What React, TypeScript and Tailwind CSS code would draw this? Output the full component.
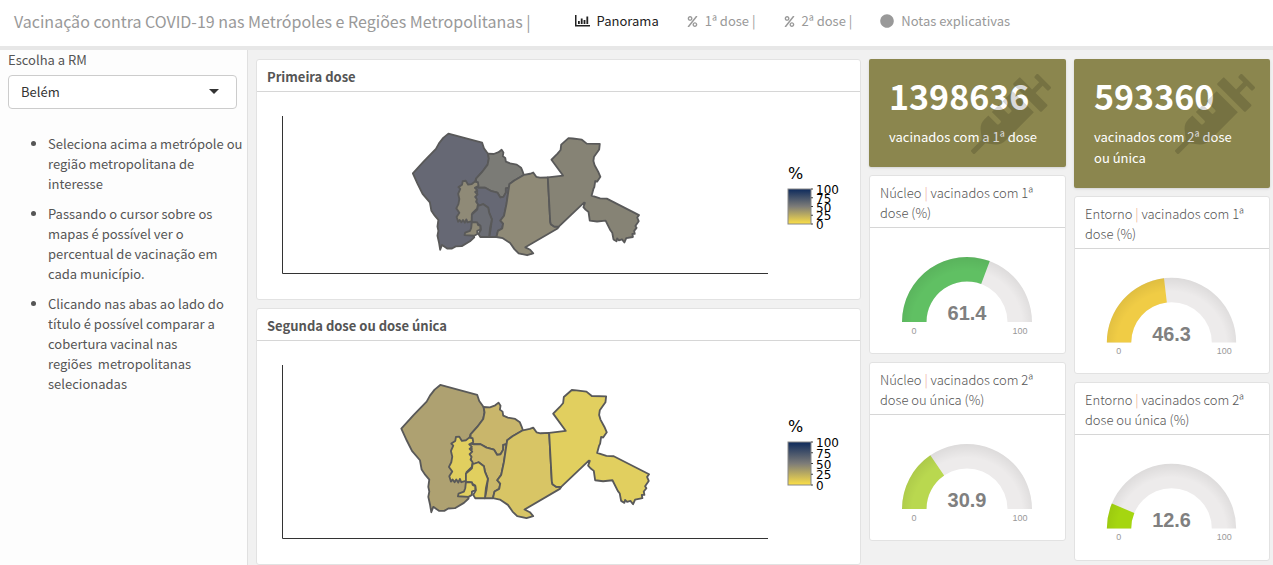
import { useState } from 'react'
import { FaCircle, FaPercent, FaSyringe } from 'react-icons/fa'

const SHAPES = {
    west: '151,30 262,60 268,78 281,96 284,112 280,132 262,156 242,178 238,190 228,300 228,340 236,371 222,384 195,400 175,401 163,408 147,408 130,396 124,412 120,388 115,366 118,350 115,336 118,314 106,300 95,284 90,256 66,228 50,196 34,161 70,121 110,80 120,62 134,44',
    north: '281,96 300,97 316,91 326,83 332,92 330,104 338,110 340,122 354,128 376,132 390,142 395,154 399,166 368,184 352,196 350,208 340,210 340,224 332,238 322,240 312,224 290,218 272,208 252,208 240,202 242,192 242,178 262,156 280,132 284,112',
    middle: '240,206 252,208 272,208 290,218 312,224 322,240 332,238 340,224 340,210 350,208 342,262 334,300 322,316 331,326 328,342 314,350 309,370 285,370 290,345 294,312 285,290 282,274 266,262 250,268 244,258 240,236 246,222 238,214',
    strip: '198,186 208,185 216,198 228,196 238,188 248,190 250,202 238,208 246,216 239,222 247,230 239,238 245,246 242,254 248,262 246,276 230,292 228,306 228,318 214,322 210,312 205,323 199,314 194,322 188,314 183,320 178,304 187,290 177,276 184,262 187,245 183,228 190,212 184,206 196,198',
    core: '248,268 266,262 282,274 285,290 294,312 288,340 285,370 256,370 250,360 258,346 256,332 240,322 228,322 228,296 246,280',
    south: '228,322 246,322 248,330 256,334 256,346 246,350 246,360 236,366 204,364 206,356 222,350 226,340',
    center: '399,166 420,162 430,158 440,172 452,175 478,174 486,320 488,328 500,336 514,336 510,342 404,404 420,412 430,424 410,430 382,424 368,410 354,390 330,374 309,370 314,350 328,342 331,326 322,316 334,300 342,262 350,208 352,196 368,184',
    east: '478,174 528,168 490,116 510,96 520,84 522,66 546,45 560,46 590,50 606,63 649,64 647,82 630,106 628,120 632,134 644,156 651,172 640,188 634,186 631,206 628,212 622,234 650,243 672,244 778,298 772,306 777,318 766,334 770,340 762,350 764,360 756,360 758,370 736,374 730,388 722,378 712,381 706,375 704,384 694,378 690,356 684,348 668,316 640,319 616,316 612,288 602,280 595,272 600,258 597,257 514,336 500,336 488,328 486,320',
}

const MAPS = [
    {
        title: 'Primeira dose',
        viewBox: '257 92 603 207',
        transform: 'translate(402.5 124.5) scale(0.304)',
        stroke: 6,
        axis: 'M282.5 116V273.5H768',
        legend: { top: 189, height: 35, title: 179 },
        fills: { west: '#666874', north: '#7b7b76', middle: '#666874', strip: '#8f8a77', core: '#6b6d74', south: '#8f8a77', center: '#8f8a77', east: '#868375' },
    },
    {
        title: 'Segunda dose ou dose única',
        viewBox: '257 341 603 223',
        transform: 'translate(390 375) scale(0.333)',
        stroke: 5.5,
        axis: 'M282.5 365V538.5H768',
        legend: { top: 442, height: 43, title: 432 },
        fills: { west: '#aea171', north: '#c9b66b', middle: '#cbb86a', strip: '#e1cf5f', core: '#e1cf5f', south: '#e1cf5f', center: '#d8c565', east: '#e1cf5f' },
    },
]

const COLUMNS = [
    {
        total: '1398636',
        caption: 'vacinados com a 1ª dose',
        gauges: [
            { area: 'Núcleo', text: 'vacinados com 1ª dose (%)', value: 61.4, color: '#60c063' },
            { area: 'Núcleo', text: 'vacinados com 2ª dose ou única (%)', value: 30.9, color: '#b9d84f' },
        ],
    },
    {
        total: '593360',
        caption: 'vacinados com 2ª dose ou única',
        gauges: [
            { area: 'Entorno', text: 'vacinados com 1ª dose (%)', value: 46.3, color: '#f0cc45' },
            { area: 'Entorno', text: 'vacinados com 2ª dose ou única (%)', value: 12.6, color: '#a5d610' },
        ],
    },
]

function ChartIcon() {
    return (
        <svg viewBox="0 0 15 12" className="w-[15px] h-3" fill="currentColor">
            <path d="M0 0h1.5v10H15v1.5H0zM3 6h1.8v3H3zM5.8 3.5h1.8v5.5h-1.8zM8.6 5h1.8v4h-1.8zM11.4 1.5h1.8v7.5h-1.8z" />
        </svg>
    )
}

function NavLink({ icon, children, active = false }) {
    return (
        <a href="#" className={`flex items-center gap-[7px] ${active ? 'text-[#222]' : 'text-[#999]'}`}>
            {icon}
            <span>{children}</span>
        </a>
    )
}

function Card({ title, bold = false, children }) {
    return (
        <section className="bg-white border border-[#e2e2e2] rounded-[3px]">
            <h2 className={`pt-[7px] pb-1 px-[10px] border-b border-[#d6d6d6] leading-5 text-[#555] ${bold ? 'font-bold' : 'font-light'}`}>{title}</h2>
            {children}
        </section>
    )
}

function RegionMap({ map, id }) {
    const { top, height, title } = map.legend

    return (
        <svg viewBox={map.viewBox} className="block w-full h-auto">
            <defs>
                <linearGradient id={id} x1="0" y1="0" x2="0" y2="1">
                    <stop offset="0" stopColor="#0d2a5c" />
                    <stop offset="0.5" stopColor="#7d7c78" />
                    <stop offset="1" stopColor="#fde047" />
                </linearGradient>
            </defs>
            <path d={map.axis} fill="none" stroke="#333" />
            <g transform={map.transform} stroke="#595959" strokeWidth={map.stroke} strokeLinejoin="round">
                {Object.keys(SHAPES).map((key) => <polygon key={key} points={SHAPES[key]} fill={map.fills[key]} />)}
            </g>
            <text x="788" y={title} fontSize="16" fill="#000">%</text>
            <rect x="788" y={top} width="23" height={height} fill={`url(#${id})`} stroke="#888" />
            {[100, 75, 50, 25, 0].map((tick, i) => {
                const y = top + (height * i) / 4
                return (
                    <g key={tick}>
                        <path d={`M811 ${y}h2`} stroke="#444" />
                        <text x="816" y={y + 5} fontSize="12" fill="#000">{tick}</text>
                    </g>
                )
            })}
        </svg>
    )
}

function arc(share) {
    const angle = Math.PI * (1 - share)
    const cos = Math.cos(angle)
    const sin = Math.sin(angle)
    return `M32 94A65 65 0 0 1 ${97 + 65 * cos} ${94 - 65 * sin}L${97 + 40.5 * cos} ${94 - 40.5 * sin}A40.5 40.5 0 0 0 56.5 94Z`
}

function Gauge({ value, color, id }) {
    return (
        <svg viewBox="0 0 195 125" className="block w-full h-auto">
            <defs>
                <radialGradient id={id} gradientUnits="userSpaceOnUse" cx="97" cy="98" r="69">
                    <stop offset="0.8" stopColor="#000" stopOpacity="0" />
                    <stop offset="1" stopColor="#000" stopOpacity="0.07" />
                </radialGradient>
            </defs>
            <path d={arc(1)} fill="#edebeb" />
            <path d={arc(value / 100)} fill={color} />
            <path d={arc(1)} fill={`url(#${id})`} />
            <text x="97" y="92" textAnchor="middle" fontSize="20" fontWeight="bold" fill="#808080">{value}</text>
            <text x="44" y="106" textAnchor="middle" fontSize="9" fill="#999">0</text>
            <text x="150" y="106" textAnchor="middle" fontSize="9" fill="#999">100</text>
        </svg>
    )
}

function ValueBox({ total, caption }) {
    return (
        <section className="relative bg-[#8b864e] text-white rounded-[2px] px-5 pt-[15px] pb-5 shadow-sm">
            <p className="text-[34px] leading-[43px] font-bold">{total}</p>
            <p className="leading-[21px] pt-[9px]">{caption}</p>
            <FaSyringe className="absolute top-[15px] right-[15px] size-20 text-black/15" />
        </section>
    )
}

export default function App() {
    const [region, setRegion] = useState('Belém')

    return (
        <div className="min-h-screen flex flex-col bg-[#f1f1f1] text-[13px] leading-5 text-[#555] font-['Noto_Sans_CJK_SC',sans-serif]">
            <header className="flex items-center h-[50px] pl-[14px] pb-1 border-b-4 border-[#e7e7e7] bg-white whitespace-nowrap">
                <h1 className="text-base leading-6 text-[#999] mr-11">Vacinação contra COVID-19 nas Metrópoles e Regiões Metropolitanas |</h1>
                <nav className="flex gap-7">
                    <NavLink icon={<ChartIcon />} active>Panorama</NavLink>
                    <NavLink icon={<FaPercent className="size-[11px]" />}>1ª dose |</NavLink>
                    <NavLink icon={<FaPercent className="size-[11px]" />}>2ª dose |</NavLink>
                    <NavLink icon={<FaCircle className="size-[14px]" />}>Notas explicativas</NavLink>
                </nav>
            </header>
            <div className="flex flex-1">
                <aside className="w-[248px] shrink-0 bg-[#fdfdfd] border-r border-[#e0e0e0] pl-2 pr-[10px]">
                    <label htmlFor="rm" className="block leading-5 mb-[5px]">Escolha a RM</label>
                    <div className="relative">
                        <select id="rm" value={region} onChange={(e) => setRegion(e.target.value)} className="block w-full h-[34px] appearance-none bg-white border border-[#ccc] rounded-[4px] pl-3 text-[#333] outline-none">
                            <option>Belém</option>
                        </select>
                        <i className="absolute right-[18px] top-[14px] border-x-[5px] border-t-[5px] border-x-transparent border-t-[#333]"></i>
                    </div>
                    <ul className="list-disc pl-10 mt-[25px] flex flex-col gap-[10px] -mr-2">
                        <li>Seleciona acima a metrópole ou região metropolitana de interesse</li>
                        <li>Passando o cursor sobre os mapas é possível ver o percentual de vacinação em cada município.</li>
                        <li>Clicando nas abas ao lado do título é possível comparar a cobertura vacinal nas regiões{'\u00a0\u00a0'}metropolitanas selecionadas</li>
                    </ul>
                </aside>
                <main className="flex-1 min-w-0 grid grid-cols-[605fr_197fr_196fr] items-start gap-2 pl-2 pr-[3px] pt-[9px]">
                    <div className="flex flex-col gap-2">
                        {MAPS.map((map, i) => (
                            <Card key={map.title} title={map.title} bold>
                                <div className="font-['DejaVu_Sans',sans-serif]">
                                    <RegionMap map={map} id={`scale-${i}`} />
                                </div>
                            </Card>
                        ))}
                    </div>
                    {COLUMNS.map((column) => (
                        <div key={column.total} className="flex flex-col gap-2">
                            <ValueBox total={column.total} caption={column.caption} />
                            {column.gauges.map((gauge) => (
                                <Card key={gauge.text} title={<>{gauge.area} <span className="text-[#eda58a]">|</span> {gauge.text}</>}>
                                    <div className="font-['Liberation_Sans',sans-serif]">
                                        <Gauge value={gauge.value} color={gauge.color} id={`shade-${gauge.value}`} />
                                    </div>
                                </Card>
                            ))}
                        </div>
                    ))}
                </main>
            </div>
        </div>
    )
}
